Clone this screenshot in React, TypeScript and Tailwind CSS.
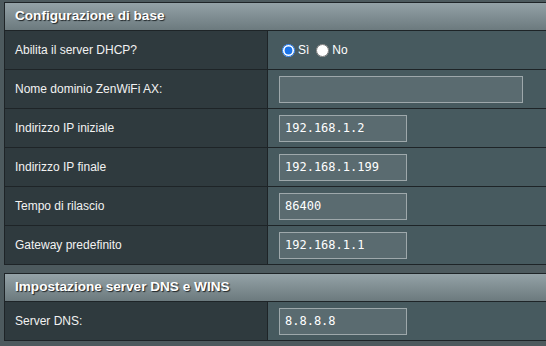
import { useState } from "react";

type Row = { label: string; kind: "radio" | "text" | "wide"; value?: string };

const basicRows: Row[] = [
  { label: "Abilita il server DHCP?", kind: "radio" },
  { label: "Nome dominio ZenWiFi AX:", kind: "wide", value: "" },
  { label: "Indirizzo IP iniziale", kind: "text", value: "192.168.1.2" },
  { label: "Indirizzo IP finale", kind: "text", value: "192.168.1.199" },
  { label: "Tempo di rilascio", kind: "text", value: "86400" },
  { label: "Gateway predefinito", kind: "text", value: "192.168.1.1" },
];

const dnsRows: Row[] = [{ label: "Server DNS:", kind: "text", value: "8.8.8.8" }];

const Header = ({ title }: { title: string }) => (
  <div className="h-[28px] flex items-center px-[10px] border-b border-[#1e2427] bg-gradient-to-b from-[#94a2a7] to-[#6c7a7e] text-[13.6px] font-bold text-white [text-shadow:1px_1px_1px_#1e2427]">
    {title}
  </div>
);

const DhcpRadio = () => {
  const [on, setOn] = useState(true);
  return (
    <div className="flex items-center gap-[7px] ml-[3px] text-[12px] text-white">
      <label className="flex items-center gap-[3px]">
        <input
          type="radio"
          checked={on}
          onChange={() => setOn(true)}
          className="w-[13px] h-[13px] m-0 accent-[#1a73e8]"
        />
        <span>Sì</span>
      </label>
      <label className="flex items-center gap-[3px]">
        <input
          type="radio"
          checked={!on}
          onChange={() => setOn(false)}
          className="w-[13px] h-[13px] m-0 accent-[#1a73e8]"
        />
        <span>No</span>
      </label>
    </div>
  );
};

const Field = ({ row }: { row: Row }) => {
  if (row.kind === "radio") return <DhcpRadio />;
  return (
    <input
      type="text"
      defaultValue={row.value}
      className={`${row.kind === "wide" ? "w-[244px]" : "w-[128px]"} h-[27px] px-[5px] bg-[#5a6b70] border border-[#9ea8ab] text-white text-[12px] outline-none [font-family:'DejaVu_Sans_Mono',monospace]`}
    />
  );
};

const Section = ({ title, rows }: { title: string; rows: Row[] }) => (
  <div className="w-[600px] border-t border-l border-[#1e2427]">
    <Header title={title} />
    {rows.map((r) => (
      <div key={r.label} className="flex h-[39px] border-b border-[#1e2427]">
        <div className="w-[263px] shrink-0 flex items-center px-[10px] bg-[#2f3a3e] border-r border-[#1e2427] text-[12px] text-[#f2f2f2]">
          {r.label}
        </div>
        <div className="flex-1 flex items-center pl-[11px] bg-[#475a5f]">
          <Field row={r} />
        </div>
      </div>
    ))}
  </div>
);

export default function App() {
  return (
    <div
      className="w-[546px] h-[346px] overflow-hidden bg-[#4d5a5e] pt-[2px] pl-[4px] flex flex-col gap-[8px]"
      style={{ fontFamily: "'Liberation Sans', Arial, sans-serif" }}
    >
      <Section title="Configurazione di base" rows={basicRows} />
      <Section title="Impostazione server DNS e WINS" rows={dnsRows} />
    </div>
  );
}
